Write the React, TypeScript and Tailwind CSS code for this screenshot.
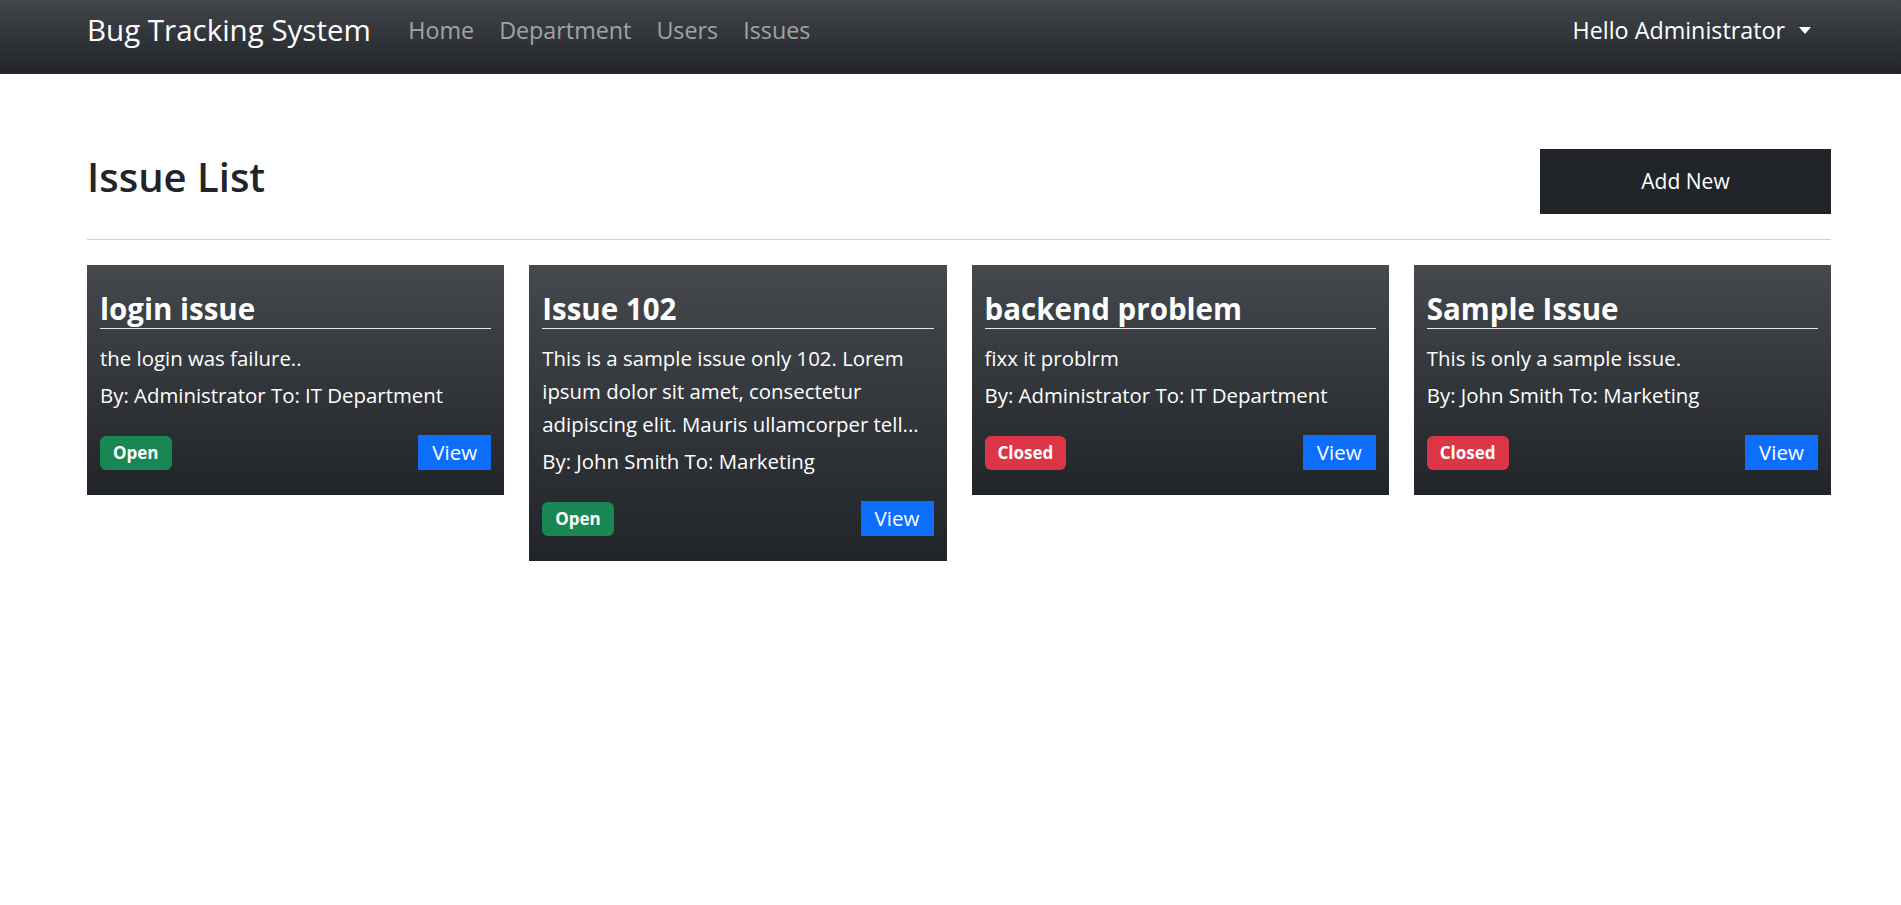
import React from "react";

type Issue = {
    title: string;
    desc: string;
    by: string;
    to: string;
    status: "Open" | "Closed";
};

const issues: Issue[] = [
    { title: "login issue", desc: "the login was failure..", by: "Administrator", to: "IT Department", status: "Open" },
    {
        title: "Issue 102",
        desc: "This is a sample issue only 102. Lorem ipsum dolor sit amet, consectetur adipiscing elit. Mauris ullamcorper tell...",
        by: "John Smith",
        to: "Marketing",
        status: "Open",
    },
    { title: "backend problem", desc: "fixx it problrm", by: "Administrator", to: "IT Department", status: "Closed" },
    { title: "Sample Issue", desc: "This is only a sample issue.", by: "John Smith", to: "Marketing", status: "Closed" },
];

function IssueCard({ issue }: { issue: Issue }) {
    return (
        <div className="bg-gradient-to-b from-[#45494d] to-[#212529] text-white px-[13px] pt-[26px] pb-[25px] self-start">
            <h3 className="text-[29.5px] font-bold leading-[36px] border-b border-[#e8e8e8] pb-[1px]">{issue.title}</h3>
            <p className="mt-[13px] text-[20.4px] leading-[33px]">{issue.desc}</p>
            <p className="mt-[4px] text-[20.4px] leading-[33px]">
                By: {issue.by} To: {issue.to}
            </p>
            <div className="mt-[23px] flex items-center justify-between">
                {issue.status === "Open" ? (
                    <span className="h-[34px] px-[13px] flex items-center rounded-[6px] bg-[#198754] text-[17px] font-bold">Open</span>
                ) : (
                    <span className="h-[34px] px-[13px] flex items-center rounded-[6px] bg-[#dc3545] text-[17px] font-bold">Closed</span>
                )}
                <button className="w-[73px] h-[35px] bg-[#0d6efd] text-[20.5px] text-white">View</button>
            </div>
        </div>
    );
}

export default function App() {
    return (
        <div className="min-h-screen bg-white font-['Open_Sans',sans-serif] text-[#212529]">
            {/* navbar */}
            <nav className="h-[74px] bg-gradient-to-b from-[#42464a] to-[#212529] flex items-center pb-[14px] pl-[87px] pr-[90px]">
                <span className="text-[29.5px] text-white mr-[25px]">Bug Tracking System</span>
                <a className="text-[23.3px] text-[#a1a3a5] px-[12.5px]">Home</a>
                <a className="text-[23.3px] text-[#a1a3a5] px-[12.5px]">Department</a>
                <a className="text-[23.3px] text-[#a1a3a5] px-[12.5px]">Users</a>
                <a className="text-[23.3px] text-[#a1a3a5] px-[12.5px]">Issues</a>
                <div className="ml-auto flex items-center text-[23.3px] text-white">
                    Hello Administrator
                    <span className="ml-[14px] w-0 h-0 border-l-[6.5px] border-r-[6.5px] border-t-[7px] border-l-transparent border-r-transparent border-t-white" />
                </div>
            </nav>

            <main className="pl-[87px] pr-[70px]">
                <div className="flex items-center justify-between pt-[75px]">
                    <h1 className="text-[40px] font-semibold leading-[52px] -mt-[10px]">Issue List</h1>
                    <button className="w-[291px] h-[65px] bg-[#212529] text-white text-[21px]">Add New</button>
                </div>
                <hr className="mt-[25px] border-t border-[#cfcfcf]" />
                <div className="grid grid-cols-4 gap-[25px] mt-[25px]">
                    {issues.map((it) => (
                        <IssueCard key={it.title} issue={it} />
                    ))}
                </div>
            </main>
        </div>
    );
}
